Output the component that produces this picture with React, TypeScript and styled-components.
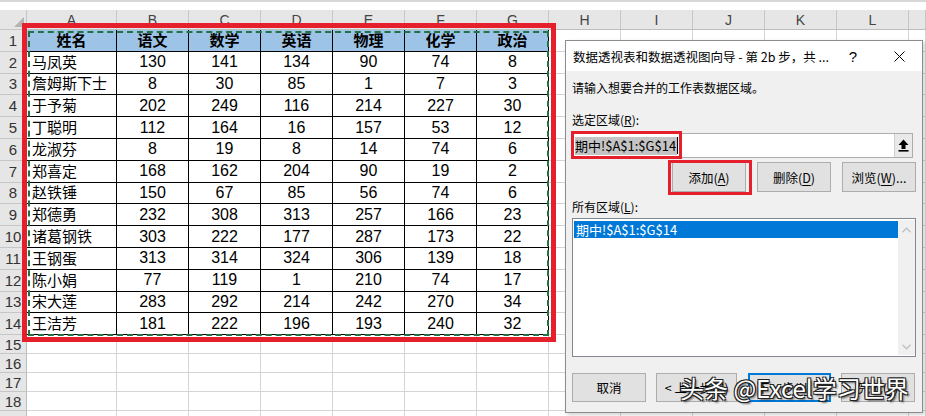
import styled, { createGlobalStyle } from "styled-components";

const GlobalStyle = createGlobalStyle`
  *, *::before, *::after { box-sizing: border-box; }
  html, body { margin: 0; padding: 0; background: #fff; }
  body {
    font-family: "Liberation Sans", "Noto Sans CJK SC", sans-serif;
    color: #000;
  }
`;

const LETTERS = ["A", "B", "C", "D", "E", "F", "G", "H", "I", "J", "K", "L", ""];

const HEADS = ["姓名", "语文", "数学", "英语", "物理", "化学", "政治"];

const ROWS: (string | number)[][] = [
  ["马凤英", 130, 141, 134, 90, 74, 8],
  ["詹姆斯下士", 8, 30, 85, 1, 7, 3],
  ["于予菊", 202, 249, 116, 214, 227, 30],
  ["丁聪明", 112, 164, 16, 157, 53, 12],
  ["龙淑芬", 8, 19, 8, 14, 74, 6],
  ["郑喜定", 168, 162, 204, 90, 19, 2],
  ["赵铁锤", 150, 67, 85, 56, 74, 6],
  ["郑德勇", 232, 308, 313, 257, 166, 23],
  ["诸葛钢铁", 303, 222, 177, 287, 173, 22],
  ["王钢蛋", 313, 314, 324, 306, 139, 18],
  ["陈小娟", 77, 119, 1, 210, 74, 17],
  ["宋大莲", 283, 292, 214, 242, 270, 34],
  ["王洁芳", 181, 222, 196, 193, 240, 32],
];

const RANGE = "期中!$A$1:$G$14";

type CellKind = "head" | "name" | "num" | "blank";

const Page = styled.div`
  position: relative;
  width: 926px;
  height: 416px;
  overflow: hidden;
  background: #fff;
`;

const TopStrip = styled.div`
  height: 10px;
  border-top: 2px solid #d8d8d8;
  background: #fff;
`;

const SheetWrap = styled.div`
  position: relative;
`;

const Sheet = styled.div`
  display: grid;
  grid-template-columns: 27px 90px repeat(11, 72px) 1fr;
  grid-template-rows: 20px repeat(14, 21.8px) repeat(5, 19px);
`;

const Corner = styled.div`
  background: #e6e6e6;
  border-right: 1px solid #c6c6c6;
  border-bottom: 1px solid #c6c6c6;
  display: flex;
  align-items: flex-end;
  justify-content: flex-end;
  padding: 0 2px 2px 0;
`;

const ColHead = styled.div`
  background: #e6e6e6;
  border-right: 1px solid #c6c6c6;
  border-bottom: 1px solid #bdbdbd;
  display: flex;
  align-items: center;
  justify-content: center;
  font-size: 14px;
  color: #444;
`;

const RowHead = styled.div`
  background: #e6e6e6;
  border-right: 1px solid #bdbdbd;
  border-bottom: 1px solid #c6c6c6;
  display: flex;
  align-items: center;
  justify-content: center;
  font-size: 15px;
  color: #333;
`;

const Cell = styled.div<{ $kind: CellKind }>`
  display: flex;
  align-items: center;
  justify-content: ${(p) => (p.$kind === "name" ? "flex-start" : "center")};
  padding-left: ${(p) => (p.$kind === "name" ? "5px" : "0")};
  background: ${(p) => (p.$kind === "head" ? "#9dc3e6" : "#fff")};
  border-right: 1px solid ${(p) => (p.$kind === "blank" ? "#d4d4d4" : "#000")};
  border-bottom: 1px solid ${(p) => (p.$kind === "blank" ? "#d4d4d4" : "#000")};
  font-size: ${(p) => (p.$kind === "num" ? "16px" : "15px")};
  font-weight: ${(p) => (p.$kind === "head" ? 700 : 400)};
  line-height: 1;
  white-space: nowrap;
  overflow: hidden;
`;

const Marquee = styled.div`
  position: absolute;
  left: 28px;
  top: 21px;
  width: 521px;
  height: 305px;
  border: 2px dashed #217346;
  pointer-events: none;
`;

const RedFrame = styled.div`
  position: absolute;
  left: 22px;
  top: 13px;
  width: 534px;
  height: 319px;
  border: 5px solid #e51f2b;
  pointer-events: none;
`;

/* ---------- dialog ---------- */

const Dialog = styled.div`
  position: absolute;
  left: 565px;
  top: 40px;
  width: 358px;
  height: 373px;
  background: #f0f0f0;
  border: 1px solid #8c8c8c;
  box-shadow: 2px 2px 4px rgba(0, 0, 0, 0.18);
  display: flex;
  flex-direction: column;
  font-family: "Noto Sans CJK SC", "Liberation Sans", sans-serif;
  font-size: 12px;
`;

const TitleBar = styled.div`
  height: 30px;
  background: #fff;
  display: flex;
  align-items: center;
  padding-left: 7px;
`;

const Title = styled.div`
  flex: 1;
  font-size: 12.5px;
  white-space: nowrap;
`;

const TitleButton = styled.div`
  width: 46px;
  height: 30px;
  display: flex;
  align-items: center;
  justify-content: center;
  font-size: 15px;
  font-family: "Liberation Sans", sans-serif;
`;

const Body = styled.div`
  display: flex;
  flex-direction: column;
  padding: 0 6px 0 6px;
`;

const Label = styled.div<{ $top: number }>`
  margin-top: ${(p) => p.$top}px;
  height: 16px;
  line-height: 16px;
  font-size: 12px;
  white-space: nowrap;
`;

const InputRow = styled.div`
  position: relative;
  margin-top: 5px;
  margin-right: 3px;
  height: 25px;
  background: #fff;
  border: 1px solid #adadad;
  display: flex;
  align-items: center;
  padding-left: 2px;
`;

const Selected = styled.span`
  background: #c4c4c4;
  font-size: 13px;
  line-height: 18px;
  padding-right: 1px;
`;

const Caret = styled.span`
  width: 1px;
  height: 17px;
  background: #000;
`;

const Spacer = styled.div`
  flex: 1;
`;

const PickButton = styled.div`
  width: 18px;
  height: 23px;
  background: #e9e9e9;
  border-left: 1px solid #d0d0d0;
  display: flex;
  align-items: center;
  justify-content: center;
`;

const InputFrame = styled.div`
  position: absolute;
  left: -2px;
  top: -3px;
  width: 111px;
  height: 28px;
  border: 3px solid #e51f2b;
  pointer-events: none;
`;

const ButtonRow = styled.div`
  margin-top: 4px;
  display: flex;
  justify-content: flex-end;
  gap: 11px;
`;

const Button = styled.div<{ $w: number; $h: number; $primary?: boolean }>`
  position: relative;
  width: ${(p) => p.$w}px;
  height: ${(p) => p.$h}px;
  background: #e1e1e1;
  border: ${(p) => (p.$primary ? "2px solid #0078d7" : "1px solid #adadad")};
  display: flex;
  align-items: center;
  justify-content: center;
  font-size: 12.5px;
  white-space: nowrap;

  u {
    text-underline-offset: 2px;
  }
`;

const ButtonFrame = styled.div`
  position: absolute;
  left: -5px;
  top: -3px;
  right: -7px;
  bottom: -4px;
  border: 3px solid #e51f2b;
  pointer-events: none;
`;

const ListBox = styled.div`
  margin-top: 3px;
  height: 139px;
  background: #fff;
  border: 1px solid #828790;
  display: flex;
  padding: 1px 0 1px 1px;
`;

const ListItems = styled.div`
  flex: 1;
  padding-top: 1px;
`;

const ListItem = styled.div`
  height: 17px;
  background: #0078d7;
  color: #fff;
  font-size: 13px;
  line-height: 17px;
  padding-left: 2px;
`;

const ScrollBar = styled.div`
  width: 17px;
  background: #f0f0f0;
  display: flex;
  flex-direction: column;
  justify-content: space-between;
  align-items: center;
  padding: 7px 0 5px;
`;

const FooterRow = styled.div`
  margin-top: 16px;
  display: flex;
  justify-content: space-between;
  padding-right: 1px;
`;

const Watermark = styled.div`
  position: absolute;
  left: 680px;
  top: 373px;
  font-family: "Noto Sans CJK SC", sans-serif;
  font-size: 24px;
  line-height: 30px;
  color: #fff;
  white-space: nowrap;
  text-shadow: 1px 1px 0 #222, -1px -1px 0 #222, 1px -1px 0 #222,
    -1px 1px 0 #222, 2px 2px 2px rgba(0, 0, 0, 0.6);
  pointer-events: none;
`;

const CloseIcon = () => (
  <svg width="11" height="11" viewBox="0 0 11 11">
    <path d="M0.5 0.5 L10.5 10.5 M10.5 0.5 L0.5 10.5" stroke="#000" strokeWidth="1" />
  </svg>
);

const UpIcon = () => (
  <svg width="11" height="13" viewBox="0 0 11 13">
    <path d="M5.5 0.5 L0.5 6 H3.5 V10 H7.5 V6 H10.5 Z" fill="#000" />
    <rect x="0.5" y="11" width="10" height="1.6" fill="#000" />
  </svg>
);

const Chevron = ({ down }: { down?: boolean }) => (
  <svg width="9" height="6" viewBox="0 0 9 6">
    <polyline
      points={down ? "0.5,0.8 4.5,4.8 8.5,0.8" : "0.5,5.2 4.5,1.2 8.5,5.2"}
      fill="none"
      stroke="#c0c0c0"
      strokeWidth="1.4"
    />
  </svg>
);

const CornerMark = () => (
  <svg width="10" height="10" viewBox="0 0 10 10">
    <polygon points="10,0 10,10 0,10" fill="#b4b4b4" />
  </svg>
);

function kindOf(row: number, col: number): CellKind {
  if (row > 14 || col > 7) return "blank";
  if (row === 1) return "head";
  return col === 1 ? "name" : "num";
}

function valueOf(row: number, col: number) {
  if (row > 14 || col > 7) return "";
  if (row === 1) return HEADS[col - 1];
  return ROWS[row - 2][col - 1];
}

export default function App() {
  const rows = Array.from({ length: 19 }, (_, i) => i + 1);

  return (
    <Page>
      <GlobalStyle />
      <TopStrip />
      <SheetWrap>
        <Sheet>
          <Corner>
            <CornerMark />
          </Corner>
          {LETTERS.map((l, i) => (
            <ColHead key={"h" + i}>{l}</ColHead>
          ))}
          {rows.map((r) => [
            <RowHead key={"r" + r}>{r}</RowHead>,
            ...LETTERS.map((_, i) => {
              const col = i + 1;
              return (
                <Cell key={r + "-" + col} $kind={kindOf(r, col)}>
                  {valueOf(r, col)}
                </Cell>
              );
            }),
          ])}
        </Sheet>
        <Marquee />
        <RedFrame />
      </SheetWrap>

      <Dialog>
        <TitleBar>
          <Title>数据透视表和数据透视图向导 - 第 2b 步，共 ...</Title>
          <TitleButton>?</TitleButton>
          <TitleButton>
            <CloseIcon />
          </TitleButton>
        </TitleBar>
        <Body>
          <Label $top={9}>请输入想要合并的工作表数据区域。</Label>
          <Label $top={16}>
            选定区域(<u>R</u>):
          </Label>
          <InputRow>
            <Selected>{RANGE}</Selected>
            <Caret />
            <Spacer />
            <PickButton>
              <UpIcon />
            </PickButton>
            <InputFrame />
          </InputRow>
          <ButtonRow>
            <Button $w={74} $h={30}>
              添加(<u>A</u>)
              <ButtonFrame />
            </Button>
            <Button $w={74} $h={30}>
              删除(<u>D</u>)
            </Button>
            <Button $w={74} $h={30}>
              浏览(<u>W</u>)...
            </Button>
          </ButtonRow>
          <Label $top={7}>
            所有区域(<u>L</u>):
          </Label>
          <ListBox>
            <ListItems>
              <ListItem>{RANGE}</ListItem>
            </ListItems>
            <ScrollBar>
              <Chevron />
              <Chevron down />
            </ScrollBar>
          </ListBox>
          <FooterRow>
            <Button $w={74} $h={29}>
              取消
            </Button>
            <Button $w={81} $h={29}>
              &lt; 上一步(<u>B</u>)
            </Button>
            <Button $w={83} $h={29} $primary>
              下一步(<u>N</u>) &gt;
            </Button>
            <Button $w={74} $h={29}>
              完成(<u>F</u>)
            </Button>
          </FooterRow>
        </Body>
      </Dialog>

      <Watermark>头条 @Excel学习世界</Watermark>
    </Page>
  );
}
